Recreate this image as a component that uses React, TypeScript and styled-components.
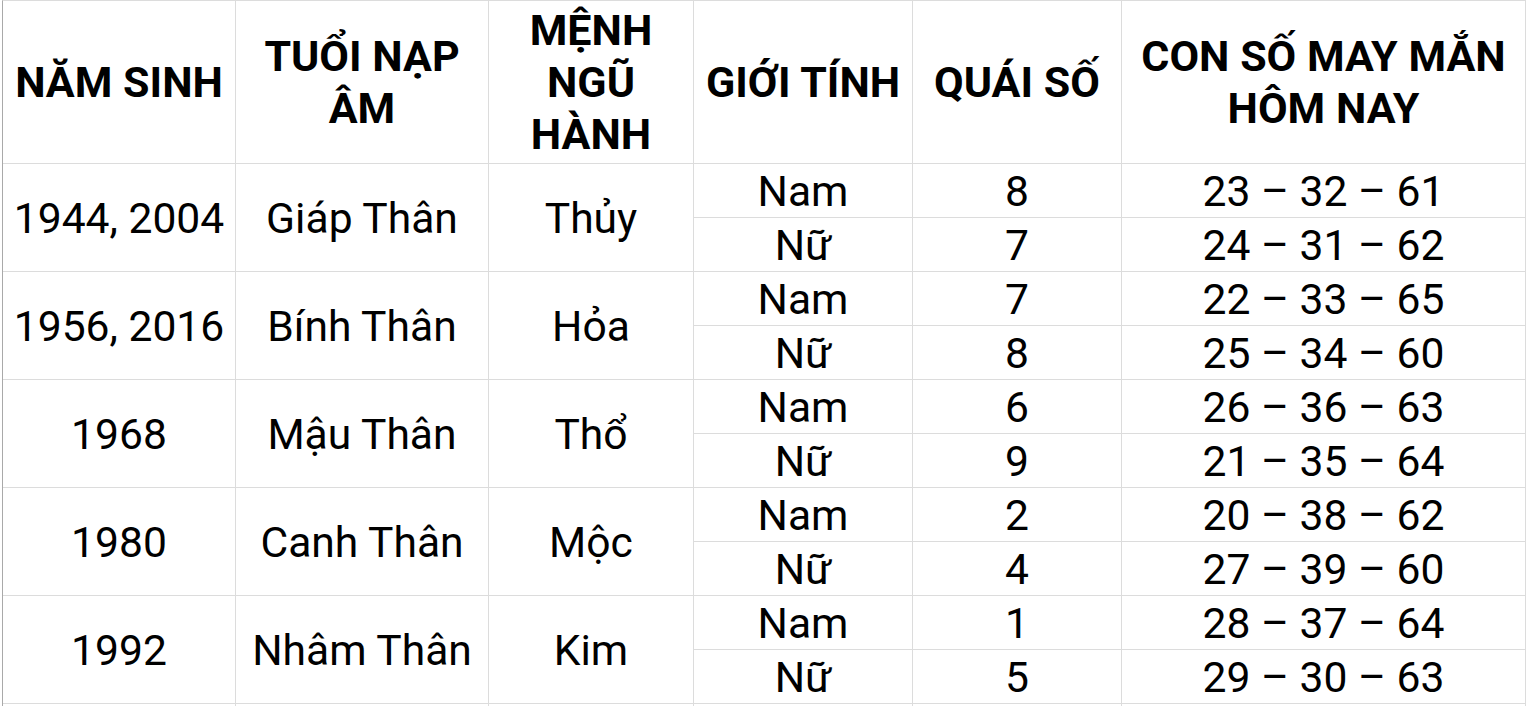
import React from "react";
import styled, { createGlobalStyle } from "styled-components";

const Global = createGlobalStyle`
  html, body { margin: 0; padding: 0; background: #fff; overflow: hidden; }
  body { font-family: Roboto, "Noto Sans", "Liberation Sans", sans-serif; color: #000; }
`;

const Sheet = styled.div`
  display: grid;
  grid-template-columns: 233px 253px 205px 219px 209px 404px;
  grid-template-rows: 163px repeat(11, 54px);
  margin-left: 2px;
  width: max-content;
  border-left: 1px solid #a9a9a9;
  border-top: 1px solid #dcdcdc;
`;

const Cell = styled.div<{ $span?: number; $head?: boolean }>`
  box-sizing: border-box;
  display: flex;
  align-items: center;
  justify-content: center;
  text-align: center;
  padding: 0 4px;
  border-right: 1px solid #dcdcdc;
  border-bottom: 1px solid #dcdcdc;
  grid-row: span ${(p) => p.$span ?? 1};
  font-size: ${(p) => (p.$head ? "43px" : "42.6px")};
  font-weight: ${(p) => (p.$head ? 700 : 400)};
  line-height: ${(p) => (p.$head ? "52px" : "48px")};
  white-space: ${(p) => (p.$head ? "normal" : "nowrap")};
`;

const headers = [
  "NĂM SINH",
  "TUỔI NẠP ÂM",
  "MỆNH NGŨ HÀNH",
  "GIỚI TÍNH",
  "QUÁI SỐ",
  "CON SỐ MAY MẮN HÔM NAY",
];

const groups = [
  { year: "1944, 2004", tuoi: "Giáp Thân", menh: "Thủy", rows: [["Nam", "8", "23 – 32 – 61"], ["Nữ", "7", "24 – 31 – 62"]] },
  { year: "1956, 2016", tuoi: "Bính Thân", menh: "Hỏa", rows: [["Nam", "7", "22 – 33 – 65"], ["Nữ", "8", "25 – 34 – 60"]] },
  { year: "1968", tuoi: "Mậu Thân", menh: "Thổ", rows: [["Nam", "6", "26 – 36 – 63"], ["Nữ", "9", "21 – 35 – 64"]] },
  { year: "1980", tuoi: "Canh Thân", menh: "Mộc", rows: [["Nam", "2", "20 – 38 – 62"], ["Nữ", "4", "27 – 39 – 60"]] },
  { year: "1992", tuoi: "Nhâm Thân", menh: "Kim", rows: [["Nam", "1", "28 – 37 – 64"], ["Nữ", "5", "29 – 30 – 63"]] },
];

export default function App() {
  return (
    <>
      <Global />
      <Sheet>
        {headers.map((h) => (
          <Cell key={h} $head>
            {h}
          </Cell>
        ))}
        {groups.map((g) => (
          <React.Fragment key={g.year}>
            <Cell $span={2}>{g.year}</Cell>
            <Cell $span={2}>{g.tuoi}</Cell>
            <Cell $span={2}>{g.menh}</Cell>
            <Cell>{g.rows[0][0]}</Cell>
            <Cell>{g.rows[0][1]}</Cell>
            <Cell>{g.rows[0][2]}</Cell>
            <Cell>{g.rows[1][0]}</Cell>
            <Cell>{g.rows[1][1]}</Cell>
            <Cell>{g.rows[1][2]}</Cell>
          </React.Fragment>
        ))}
        {headers.map((h) => (
          <Cell key={"e" + h} />
        ))}
      </Sheet>
    </>
  );
}
